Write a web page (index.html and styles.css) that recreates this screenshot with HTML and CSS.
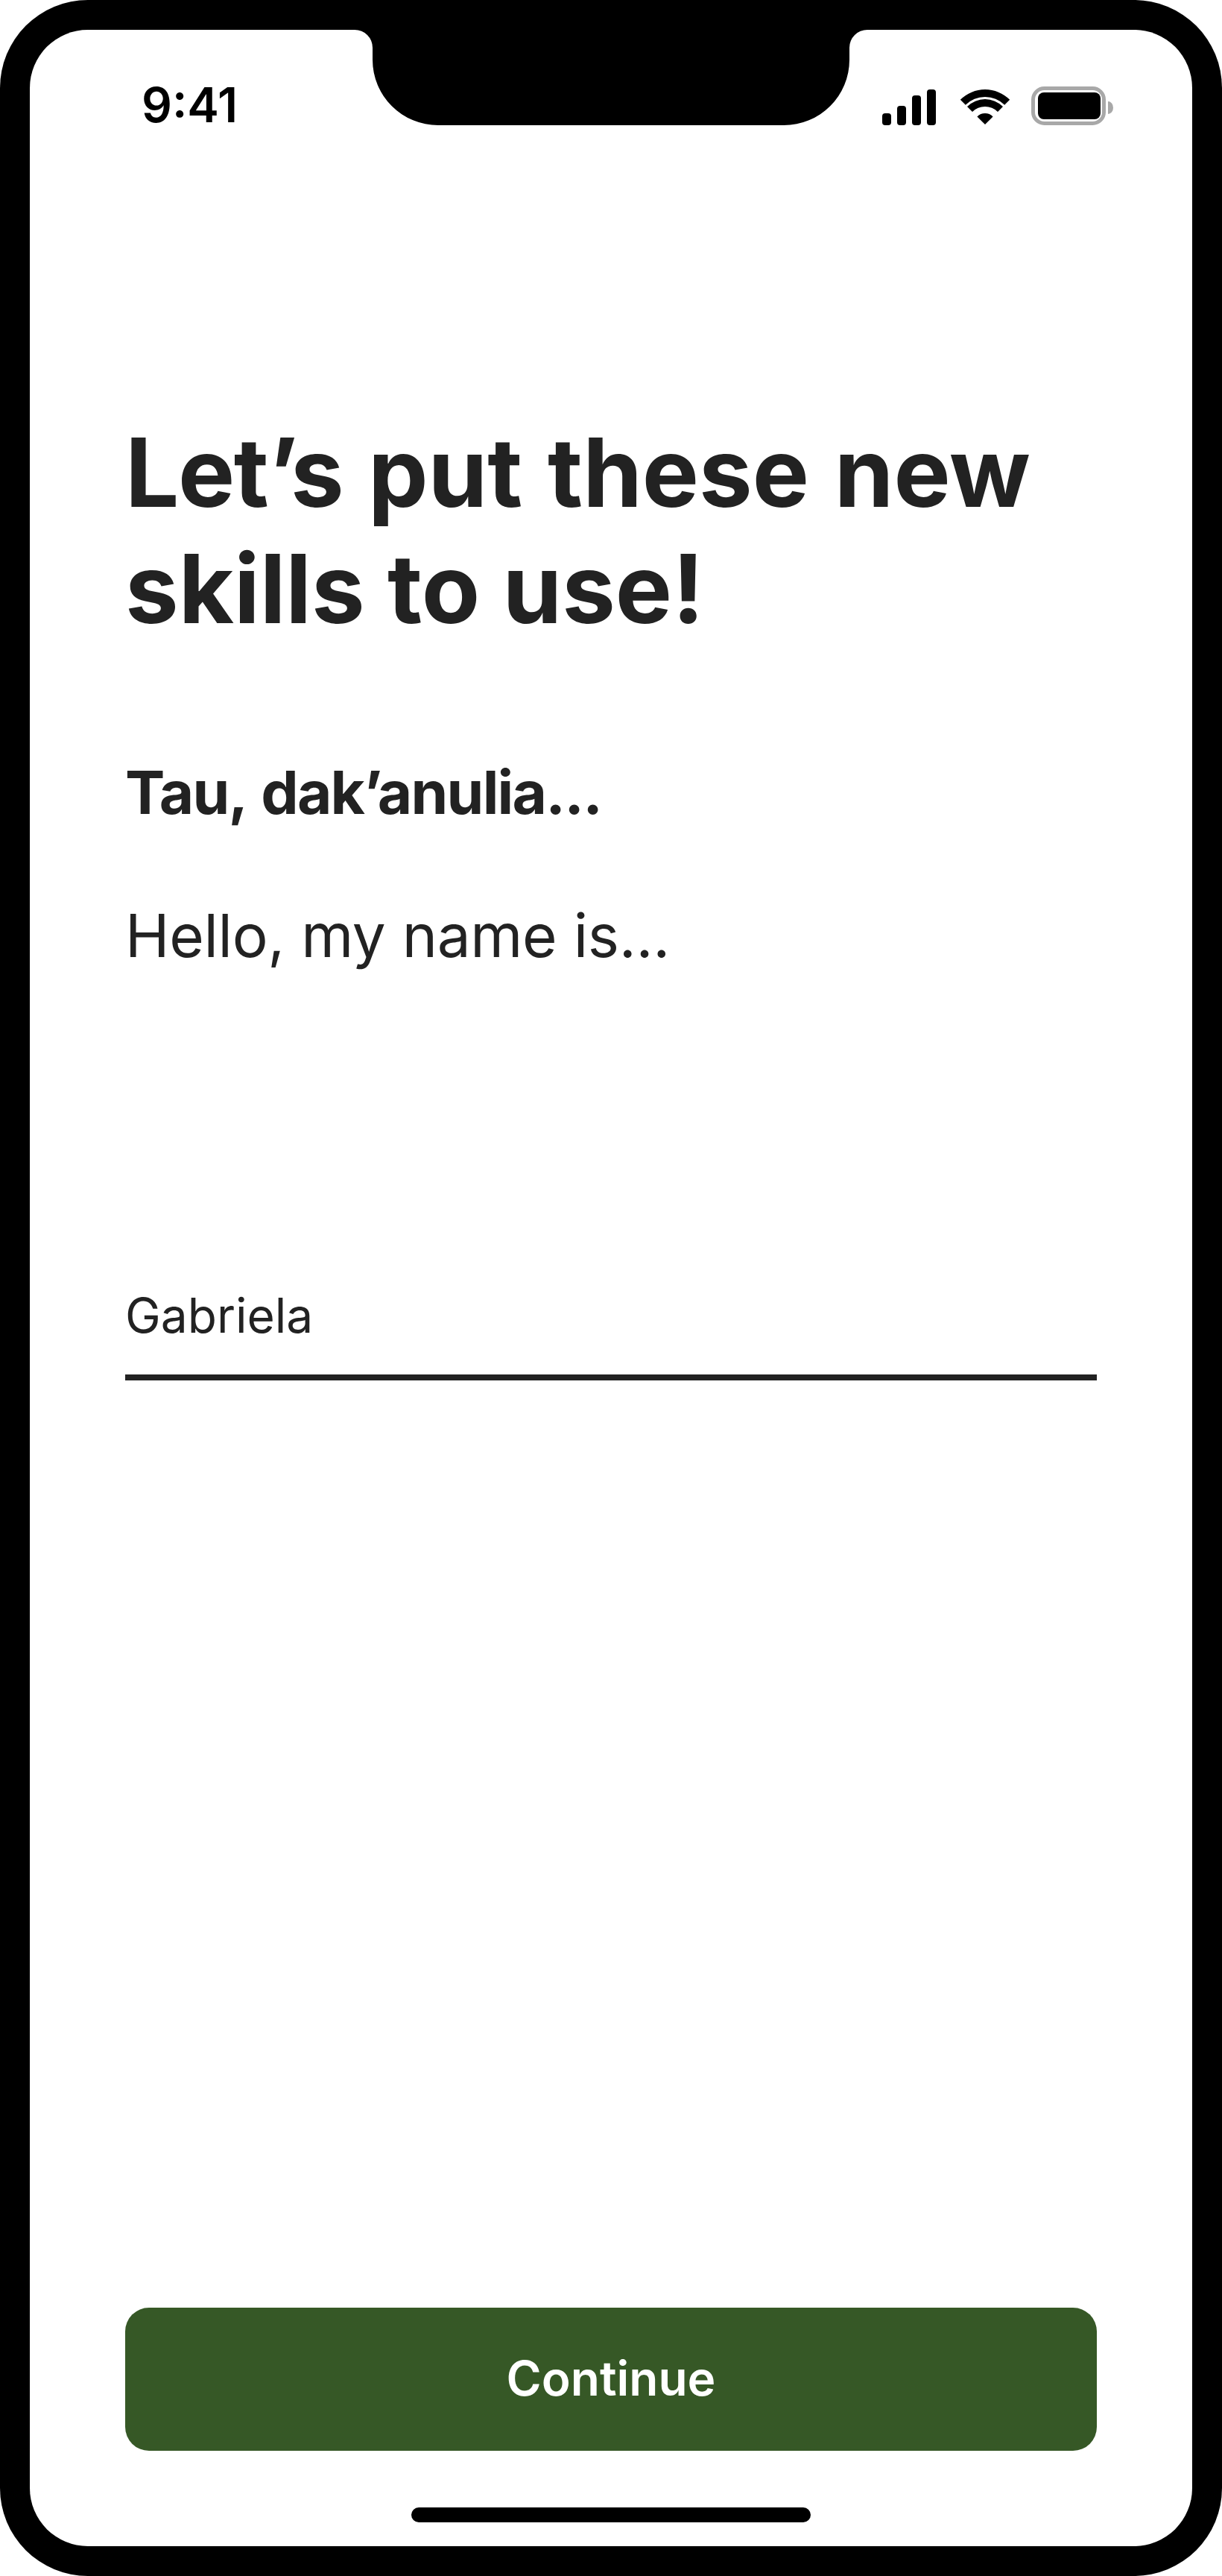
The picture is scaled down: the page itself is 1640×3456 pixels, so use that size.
FILE: index.html
```html
<!DOCTYPE html>
<html lang="en">
<head>
<meta charset="utf-8">
<title>Let’s put these new skills to use!</title>
<link rel="stylesheet" href="styles.css">
</head>
<body>
<div class="phone">
  <main class="screen">
    <svg class="notch" width="688" height="128" viewBox="0 0 688 128" aria-hidden="true"><path d="M0 0A24 24 0 0 1 24 24V40A88 88 0 0 0 112 128H576A88 88 0 0 0 664 40V24A24 24 0 0 1 688 0Z"/></svg>
    <header class="status">
      <span class="time">9:41</span>
      <div class="status-icons">
        <svg class="signal" width="72" height="48" viewBox="0 0 72 48" aria-hidden="true"><rect x="0" y="32" width="12" height="16" rx="4"/><rect x="20" y="22" width="12" height="26" rx="4"/><rect x="40" y="8" width="12" height="40" rx="4"/><rect x="60" y="0" width="12" height="48" rx="4"/></svg>
        <svg class="wifi" width="68" height="48" viewBox="0 0 68 48" aria-hidden="true"><path d="M0.8 13.8A47 47 0 0 1 67.2 13.8L60.2 20.8A37 37 0 0 0 7.8 20.8Z"/><path d="M10 23A34 34 0 0 1 58 23L51 30A24 24 0 0 0 17 30Z"/><path d="M23.4 36.4A15 15 0 0 1 44.6 36.4L34 47Z"/></svg>
        <svg class="battery" width="110" height="52" viewBox="0 0 110 52" aria-hidden="true"><rect class="battery-case" x="2.5" y="2.5" width="95" height="47" rx="15"/><rect x="9" y="8" width="84" height="36" rx="8"/><path class="battery-tip" d="M103 20A7 8.5 0 0 1 103 37Z"/></svg>
      </div>
    </header>
    <section class="content">
      <h1 class="title"><span class="title-line first"><span class="word-lets">Let’s</span> put these new</span> <span class="title-line">skills to use!</span></h1>
      <p class="prompt">Tau, dak’anulia...</p>
      <p class="translation">Hello, my name is...</p>
      <div class="field">Gabriela</div>
    </section>
    <footer class="actions">
      <button class="continue" type="button">Continue</button>
      <div class="home-bar"></div>
    </footer>
  </main>
</div>
</body>
</html>
```

FILE: styles.css
```css
* { box-sizing: border-box; }
html, body { margin: 0; padding: 0; background: #fff; }
body { font-family: Inter, "Liberation Sans", sans-serif; color: #222; }
.phone { width: 1640px; height: 3456px; padding: 40px; background: #000; border-radius: 118px; }
.screen { position: relative; width: 1560px; height: 3376px; background: #fff; border-radius: 78px; overflow: hidden; display: flex; flex-direction: column; }
.notch { position: absolute; top: 0; left: 436px; display: block; fill: #000; }
.status { height: 128px; display: flex; justify-content: space-between; align-items: flex-start; padding: 76px 106px 0 150px; flex: none; }
.time { margin-top: 1px; font-size: 64px; font-weight: 600; line-height: 48px; color: #000; }
.status-icons { display: flex; align-items: flex-end; gap: 32px; }
.status-icons svg { display: block; fill: #000; }
.wifi { margin-right: -4px; }
.battery-case { fill: none; stroke: #a8a8a8; stroke-width: 5; }
.battery-tip { fill: #a8a8a8; }
.content { flex: 1; padding: 0 128px; display: flex; flex-direction: column; }
.title { margin: 388px 0 0; font-size: 128px; line-height: 156px; font-weight: 700; }
.title-line { display: block; }
.title-line.first { word-spacing: 3.5px; }
.word-lets { letter-spacing: -1.5px; }
.prompt { margin: 145px 0 0; font-size: 80px; line-height: 100px; font-weight: 700; letter-spacing: -1.75px; word-spacing: 4px; }
.translation { margin: 92px 0 0; font-size: 80px; line-height: 100px; font-weight: 380; letter-spacing: -0.3px; }
.field { margin-top: 420px; height: 127px; font-size: 64px; line-height: 80px; font-weight: 380; border-bottom: 8px solid #222; }
.actions { flex: none; padding: 0 128px 32px; display: flex; flex-direction: column; align-items: center; }
.continue { width: 100%; height: 192px; padding: 0 0 4px; border: 0; border-radius: 32px; background: #365826; color: #fff; font-family: inherit; font-size: 64px; font-weight: 600; }
.home-bar { margin-top: 76px; width: 536px; height: 20px; border-radius: 10px; background: #000; }
```
